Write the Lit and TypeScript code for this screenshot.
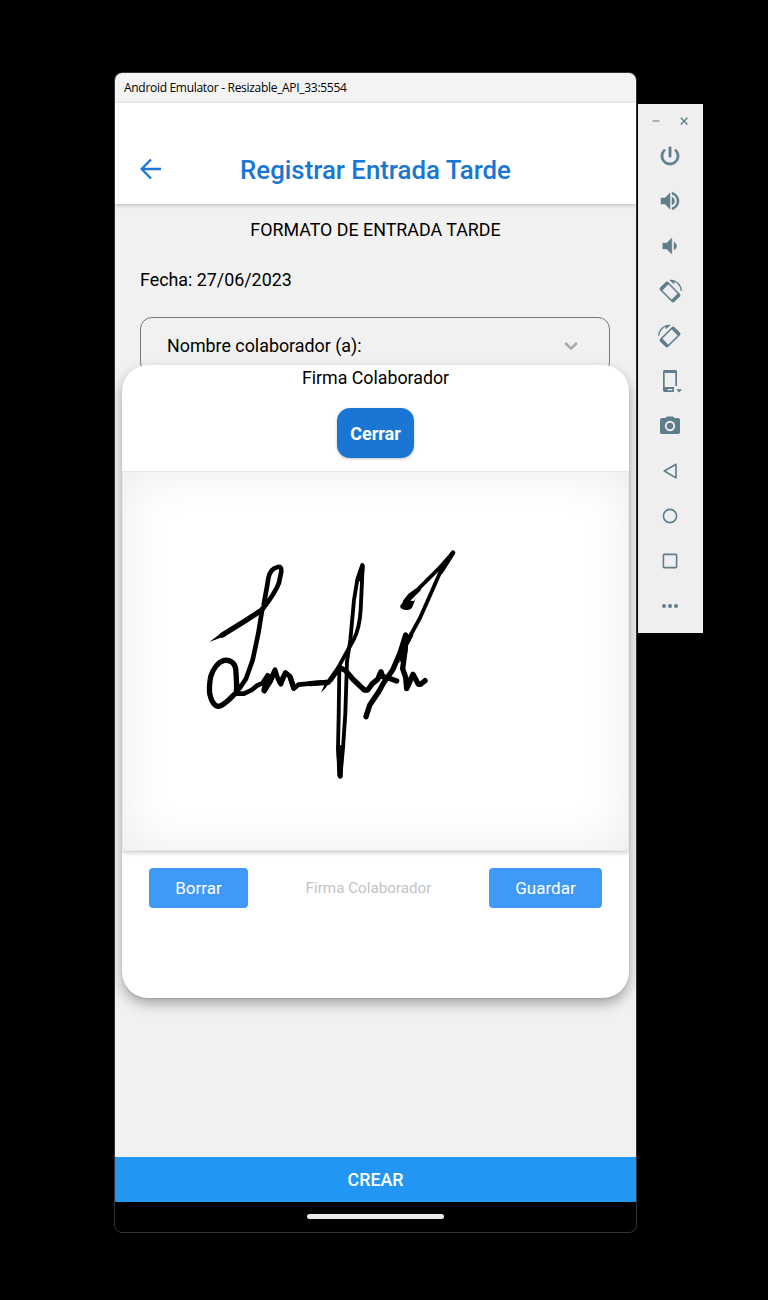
import { LitElement, html, css, svg } from "lit";
import { customElement } from "lit/decorators.js";

const rotatePhone = svg`
  <g transform="rotate(45 12 13)">
    <rect x="2.700" y="8" width="18.600" height="10" rx="1.200" fill="none" stroke="currentColor" stroke-width="1.600"/>
    <path d="M2.500 8h3v10h-3zM18.500 8h3v10h-3z"/>
  </g>
  <path d="M12 1.500C17.500 .9 22.800 5.500 23.300 11.700" fill="none" stroke="currentColor" stroke-width="1.300"/>
  <path d="M11.400 1l4.600-.1.700 3.500-1.200.3z"/>`;

const icons = [
  svg`<path stroke="currentColor" stroke-width=".8" d="M13 3h-2v10h2V3zm4.83 2.17l-1.42 1.42C17.99 7.86 19 9.81 19 12c0 3.87-3.13 7-7 7s-7-3.13-7-7c0-2.19 1.01-4.14 2.58-5.42L6.17 5.17C4.23 6.82 3 9.26 3 12c0 4.97 4.03 9 9 9s9-4.03 9-9c0-2.74-1.23-5.18-3.17-6.83z"/>`,
  svg`<path stroke="currentColor" stroke-width=".5" d="M3 9v6h4l5 5V4L7 9H3zm13.5 3c0-1.77-1.02-3.29-2.5-4.03v8.05c1.48-.73 2.5-2.25 2.5-4.02zM14 3.23v2.06c2.89.86 5 3.54 5 6.71s-2.11 5.85-5 6.71v2.06c4.01-.91 7-4.49 7-8.77s-2.99-7.86-7-8.77z"/>`,
  svg`<path stroke="currentColor" stroke-width=".4" d="M18.500 12c0-1.77-1.02-3.29-2.5-4.03v8.05c1.48-.73 2.5-2.25 2.5-4.02zM4.800 9v6h4l5 5V4l-5 5h-4z"/>`,
  rotatePhone,
  svg`<g transform="translate(24 0) scale(-1 1)">${rotatePhone}</g>`,
  svg`<path fill-rule="evenodd" d="M6.7 1h10.6c1 0 1.7.7 1.7 1.7V17h-1.7V4H6.7v14H16v5H6.7C5.700 23 5 22.300 5 21.300V2.700C5 1.700 5.700 1 6.700 1zM9.700 20v1.200h4.600V20z"/><path d="M18.200 20.200h5.900l-2.950 3.200z"/>`,
  svg`<path d="M9 2.500L7.500 4H4c-1.100 0-2 .7-2 1.800v12.400c0 1.100.9 1.900 2 1.900h16c1.100 0 2-.8 2-1.900V5.800c0-1.100-.9-1.800-2-1.800h-3.500L15 2.500z"/><circle cx="12" cy="12" r="4.200" fill="none" stroke="#efefef" stroke-width="1.900"/>`,
  svg`<path fill="none" stroke="currentColor" stroke-width="1.600" stroke-linejoin="round" d="M6.300 12l11.700-6.700v13.600z"/>`,
  svg`<circle cx="12" cy="12" r="6.600" fill="none" stroke="currentColor" stroke-width="1.600"/>`,
  svg`<rect x="5.400" y="5.400" width="13.200" height="13.200" rx=".8" fill="none" stroke="currentColor" stroke-width="1.600"/>`,
  svg`<circle cx="6" cy="12" r="2"/><circle cx="12" cy="12" r="2"/><circle cx="18" cy="12" r="2"/>`,
];

@customElement("emulator-toolbar")
class EmulatorToolbar extends LitElement {
  static styles = css`
    :host { display: block; width: 65px; height: 529px; background: #efefef; color: #607d8b; }
    .controls { display: flex; justify-content: center; gap: 16px; padding-top: 11px; height: 18px; margin-left: -1px; }
    .controls svg { width: 12px; height: 12px; }
    .tools { display: flex; flex-direction: column; align-items: center; gap: 21px; padding-top: 11px; margin-left: -1px; }
    .tool { width: 24px; height: 24px; fill: currentColor; display: block; overflow: visible; }
  `;
  render() {
    return html`
      <div class="controls">
        <svg viewBox="0 0 12 12"><path d="M2.500 6h7" stroke="#90a4ae" stroke-width="1.500"/></svg>
        <svg viewBox="0 0 12 12"><path d="M2.800 2.800l6.600 6.600M9.400 2.800L2.800 9.400" stroke="currentColor" stroke-width="1.400"/></svg>
      </div>
      <div class="tools">${icons.map((i) => html`<svg class="tool" viewBox="0 0 24 24">${i}</svg>`)}</div>
    `;
  }
}

@customElement("signature-pad")
class SignaturePad extends LitElement {
  static styles = css`
    :host { display: block; height: 380px; box-sizing: border-box; border: 1px solid #e8e8e8; background: #fff;
      box-shadow: 0 1px 5px rgba(0,0,0,.27), inset 0 0 50px rgba(0,0,0,.08); clip-path: inset(0 0 -8px 0); }
    svg { display: block; width: 505px; height: 378px; }
    .ink { fill: none; stroke: #000; stroke-linecap: round; stroke-linejoin: round; }
    .w9 { stroke-width: 11.5; }
    .w12 { stroke-width: 14; }
    .w14 { stroke-width: 16; }
  `;
  render() {
    return html`
      <svg viewBox="123 472 505 378">
        <g transform="translate(190 530) scale(.33333)">
          <path d="M58 336L78 321 95 308 106 319 88 325z"/>
          <path class="ink w14" d="M97 315L160 276 210 244"/>
          <path class="ink w12" d="M205 247L219 236C240 208 258 184 267 158L274 124C275 112 270 110 264 111C248 114 238 128 235 145L231 170L221 225"/>
          <path class="ink w12" d="M217 236L205 310L188 390L168 446L149 475"/>
          <path class="ink w14" d="M139 488C141 468 139 440 137 415C133 397 120 389 103 391C82 396 68 421 62 440C58 463 56 478 60 495C65 518 76 530 86 529C104 525 116 509 133 493"/>
          <path class="ink w12" d="M145 467L140 491L162 491L185 480L201 467L218 459L233 436L223 484L238 460L255 419L264 447L273 463L286 427L299 438L311 476L325 464L410 456"/>
          <path class="ink w14" d="M222 480L228 455 238 440M254 424L240 455M271 458L284 434M311 472L300 440"/>
        </g>
        <g transform="translate(310 530) scale(.33333)">
          <path class="ink w14" d="M0 461L54 457"/>
          <path d="M33 488L48 454 64 450 46 475z"/>
          <path class="ink w14" d="M61 450L87 413"/>
          <path class="ink w9" d="M85 412L107 372L132 327C144 303 150 270 152 240L158 110"/>
          <path class="ink w9" d="M157 105L142 148L132 210L121 330L111 395L106 550L99 655L91 740"/>
          <path class="ink w9" d="M90 740L84 655L86 560L88 420"/>
          <path d="M151 108C151 98 164 98 164 108L160 150 146 155 138 170 143 130z"/>
          <path d="M79 650L93 645 101 650 98 740C97 747 85 747 82 737z"/>
          <path class="ink w14" d="M91 414L106 421L128 447L163 480L173 480L187 461L203 448L213 425L218 440L237 445L260 453"/>
          <path class="ink w14" d="M168 560L179 526L208 482L220 460L248 420L270 369L287 315L284 370L278 416L287 442L290 476L309 433L325 463L332 463L345 452"/>
          <path d="M280 315L296 315 293 365 268 400z"/>
          <path class="ink w9" d="M292 333L330 264L353 212L399 108L429 68"/>
          <path class="ink w12" d="M290 340L303 315M393 125L429 68"/>
          <path class="ink w9" d="M428 69L386 116L326 176L299 196L284 215"/>
          <path d="M270 229L292 197 328 171 333 180 301 212 312 213 317 206 306 233C299 243 273 243 270 229z"/>
        </g>
      </svg>
    `;
  }
}

@customElement("app-root")
class AppRoot extends LitElement {
  static styles = css`
    :host { display: flex; align-items: flex-start; box-sizing: border-box; width: 768px; height: 1300px; background: #000;
      padding: 72px 0 0 114px; font-family: Roboto, "Liberation Sans", sans-serif; color: #000; }
    emulator-toolbar { margin: 32px 0 0 1px; }
    .window { position: relative; width: 523px; height: 1161px; box-sizing: border-box; border: 1px solid #333;
      border-radius: 8px; overflow: hidden; display: flex; flex-direction: column; background: #000; }
    .titlebar { height: 30px; flex: none; padding-left: 9px; background: #f3f3f3; font: 12px/30px "Open Sans", "Noto Sans", sans-serif; letter-spacing: -.3px; }
    .header { height: 101px; flex: none; box-sizing: border-box; background: #fff; padding: 33px 25px 0; display: grid;
      grid-template-columns: 24px 1fr 24px; box-shadow: 0 1px 4px rgba(0,0,0,.25); z-index: 1; }
    .back { width: 22px; height: 22px; margin-top: 22px; }
    h1 { margin: 0; font-size: 25.8px; line-height: 69px; font-weight: 500; color: #1976d2; text-align: center; white-space: nowrap; }
    .content { flex: 1; background: #f1f1f1; padding: 0 26px 0 25px; font-size: 17.85px; }
    .format { text-align: center; line-height: 24px; margin: 14px -1px 0 0; }
    .date { line-height: 24px; margin-top: 26px; }
    .select { display: flex; justify-content: space-between; align-items: center; height: 57px; margin-top: 25px; padding: 0 31px 0 26px;
      border: 1px solid #777; border-radius: 12px; box-sizing: border-box; }
    .select svg { width: 14px; height: 10px; }
    .modal { position: absolute; left: 7px; top: 292px; width: 507px; height: 633px; border-radius: 26px; background: #fff;
      box-shadow: 0 6px 13px rgba(0,0,0,.3), 0 1px 2px rgba(0,0,0,.12); z-index: 2; }
    .modalhead { height: 106px; display: flex; flex-direction: column; align-items: center; font-size: 17.8px; }
    .modalhead span { line-height: 26px; }
    button { border: 0; margin: 0; padding: 0; font-family: inherit; color: #fff; }
    .close { width: 77px; height: 50px; margin-top: 17px; border-radius: 13px; background: #1976d2; font-size: 18px; font-weight: 700;
      box-shadow: 0 1px 3px rgba(0,0,0,.25); }
    .actions { display: flex; justify-content: space-between; align-items: center; padding: 17px 27px 0; }
    .action { width: 99px; height: 40px; border-radius: 4px; background: #3f99f7; font-size: 17px; }
    .save { width: 113px; }
    .caption { color: #c3c3c3; font-size: 15.2px; }
    .create { height: 44.500px; flex: none; border-radius: 1px; background: #2196f3; font-size: 17.800px; font-weight: 500; }
    .nav { height: 30.500px; flex: none; display: flex; align-items: center; justify-content: center; }
    .pill { width: 137px; height: 5px; border-radius: 3px; background: #e8e8e8; }
  `;
  render() {
    return html`
      <div class="window">
        <div class="titlebar">Android Emulator - Resizable_API_33:5554</div>
        <div class="header">
          <svg class="back" viewBox="0 0 22 22"><path d="M21 11H2M11 1.500L1.600 11l9.400 9.500" fill="none" stroke="#1976d2" stroke-width="2.300"/></svg>
          <h1>Registrar Entrada Tarde</h1>
        </div>
        <div class="content">
          <div class="format">FORMATO DE ENTRADA TARDE</div>
          <div class="date">Fecha: 27/06/2023</div>
          <div class="select"><span>Nombre colaborador (a):</span>
            <svg viewBox="0 0 14 10"><path d="M1.200 2l5.800 5.600L12.800 2" fill="none" stroke="#aaa" stroke-width="2.500"/></svg>
          </div>
        </div>
        <button class="create">CREAR</button>
        <div class="nav"><div class="pill"></div></div>
        <div class="modal">
          <div class="modalhead"><span>Firma Colaborador</span><button class="close">Cerrar</button></div>
          <signature-pad></signature-pad>
          <div class="actions">
            <button class="action">Borrar</button>
            <span class="caption">Firma Colaborador</span>
            <button class="action save">Guardar</button>
          </div>
        </div>
      </div>
      <emulator-toolbar></emulator-toolbar>
    `;
  }
}
